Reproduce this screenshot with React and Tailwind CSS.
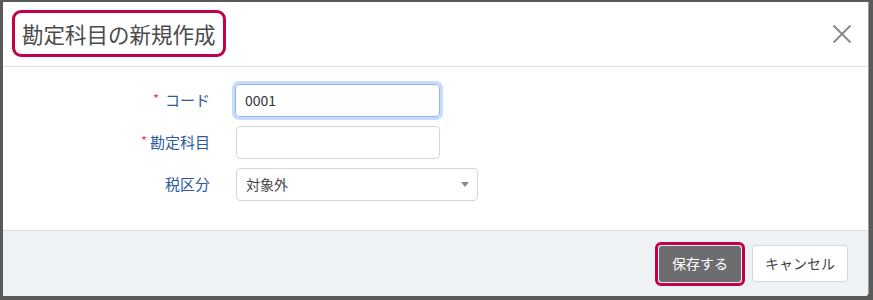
import React from "react";

export default function App() {
  const font = { fontFamily: '"Noto Sans CJK JP", "Noto Sans", sans-serif' };
  return (
    <div className="w-[873px] h-[300px] bg-[#5a5a5a] pl-[3px] pt-[2px] pr-[4px] pb-[4px] flex" style={font}>
      <div className="flex-1 flex flex-col bg-white border-r border-[#9a9a9a] rounded-br-[4px] overflow-hidden">
        {/* header */}
        <div className="h-[65px] shrink-0 border-b border-[#e3e3e3] flex items-start justify-between pl-[9px] pr-[15px] pt-[8px]">
          <div className="h-[47px] w-[214px] border-[3px] border-[#c2004b] rounded-[9px] flex items-center pl-[7px]">
            <span className="text-[21.5px] leading-none text-[#4a4a4a]">勘定科目の新規作成</span>
          </div>
          <button className="mt-[13px] w-[22px] h-[22px] flex items-center justify-center text-[#8a8a8a]">
            <svg width="20" height="20" viewBox="0 0 20 20" fill="none" stroke="currentColor" strokeWidth="2">
              <path d="M1.5 1.5 L18.5 18.5 M18.5 1.5 L1.5 18.5" />
            </svg>
          </button>
        </div>
        {/* body */}
        <div className="flex-1 flex flex-col gap-[9px] pt-[17px]">
          <div className="flex items-center">
            <div className="w-[207px] text-right text-[15px] text-[#2d5a9c] flex justify-end items-center">
              <span className="text-[#e8454b] text-[13px] mr-[6px] -mt-[3px]">*</span>コード
            </div>
            <div className="ml-[25px] w-[205px] h-[33px] rounded-[4px] border border-[#8fb4ef] shadow-[0_0_0_3px_#c9dbfa] flex items-center px-[9px] text-[14px] text-[#333]">
              0001
            </div>
          </div>
          <div className="flex items-center">
            <div className="w-[207px] text-right text-[15px] text-[#2d5a9c] flex justify-end items-center">
              <span className="text-[#e8454b] text-[13px] mr-[3px] -mt-[3px]">*</span>勘定科目
            </div>
            <div className="ml-[26px] w-[204px] h-[33px] rounded-[4px] border border-[#d6d6d6]"></div>
          </div>
          <div className="flex items-center">
            <div className="w-[207px] text-right text-[15px] text-[#2d5a9c]">税区分</div>
            <div className="ml-[26px] w-[242px] h-[33px] rounded-[4px] border border-[#d6d6d6] flex items-center justify-between pl-[9px] pr-[8px] text-[14px] text-[#444]">
              <span>対象外</span>
              <svg width="8" height="5" viewBox="0 0 8 5"><path d="M0 0 L8 0 L4 5 Z" fill="#8a8a8a" /></svg>
            </div>
          </div>
        </div>
        {/* footer */}
        <div className="h-[66px] shrink-0 bg-[#eef2f5] border-t border-[#d9dde0] flex items-center justify-end pr-[20px] gap-[7px]">
          <div className="border-[3px] border-[#c2004b] rounded-[6px] p-[1px]">
            <div className="w-[82px] h-[36px] rounded-[3px] bg-[#6b6d6f] text-white text-[14px] flex items-center justify-center">
              保存する
            </div>
          </div>
          <div className="w-[96px] h-[37px] rounded-[4px] bg-white border border-[#d6d6d6] text-[14px] text-[#444] flex items-center justify-center">
            キャンセル
          </div>
        </div>
      </div>
    </div>
  );
}
